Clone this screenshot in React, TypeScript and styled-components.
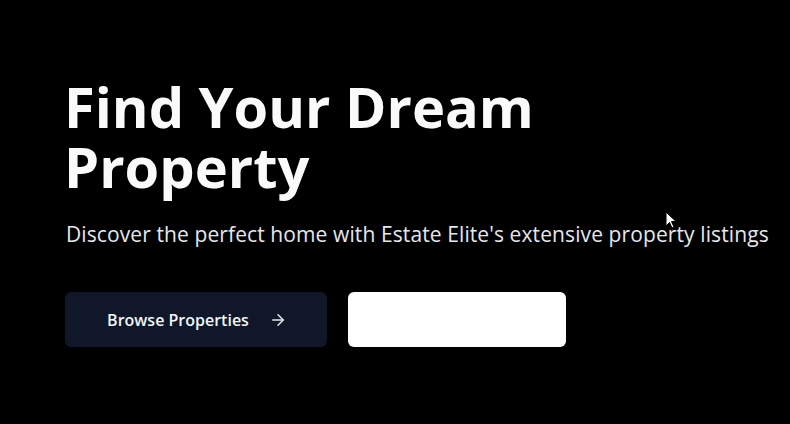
import React from "react";
import styled, { createGlobalStyle } from "styled-components";

const Global = createGlobalStyle`
  html, body { margin: 0; padding: 0; background: #000; }
  body { font-family: "Open Sans", "Noto Sans", sans-serif; }
  * { box-sizing: border-box; }
`;

const Page = styled.div`
  position: relative;
  width: 790px;
  height: 424px;
  background: #000;
  overflow: hidden;
  padding: 76px 0 0 64px;
`;

const Hero = styled.section`
  display: flex;
  flex-direction: column;
  align-items: flex-start;
`;

const Title = styled.h1`
  margin: 0;
  font-family: "Open Sans", sans-serif;
  font-weight: 700;
  font-size: 56px;
  line-height: 60px;
  letter-spacing: 0;
  color: #fafafa;
`;

const Subtitle = styled.p`
  margin: 24px 0 0 2px;
  font-family: "Open Sans", sans-serif;
  font-size: 21px;
  line-height: 28px;
  letter-spacing: 0.1px;
  color: #e5e7eb;
`;

const Actions = styled.div`
  display: flex;
  gap: 21px;
  margin: 44px 0 0 1px;
`;

const Button = styled.button<{ $variant: "dark" | "light" }>`
  display: flex;
  align-items: center;
  justify-content: center;
  gap: 20px;
  height: 55px;
  width: ${(p) => (p.$variant === "dark" ? "262px" : "218px")};
  border: none;
  border-radius: 6px;
  background: ${(p) => (p.$variant === "dark" ? "#0f1729" : "#ffffff")};
  color: #f1f5f9;
  font-family: "Open Sans", sans-serif;
  font-size: 16px;
  font-weight: 600;
  letter-spacing: 0;
  padding: 0 0 0 2px;
  cursor: pointer;
`;

const Cursor = styled.svg`
  position: absolute;
  left: 665px;
  top: 211px;
`;

export default function App() {
  return (
    <>
      <Global />
      <Page>
        <Hero>
          <Title>
            Find Your Dream
            <br />
            Property
          </Title>
          <Subtitle>
            Discover the perfect home with Estate Elite's extensive property listings
          </Subtitle>
          <Actions>
            <Button $variant="dark">
              Browse Properties
              <svg width="18" height="18" viewBox="0 0 24 24" fill="none" stroke="#e5e7eb" strokeWidth="2" strokeLinecap="round" strokeLinejoin="round">
                <path d="M5 12h14" />
                <path d="m12 5 7 7-7 7" />
              </svg>
            </Button>
            <Button $variant="light" />
          </Actions>
        </Hero>
        <Cursor width="12" height="18" viewBox="0 0 12 18">
          <path d="M1 1 L1 15 L4.5 11.5 L7 17 L9 16 L6.5 10.5 L11 10.5 Z" fill="#fff" stroke="#000" strokeWidth="1" />
        </Cursor>
      </Page>
    </>
  );
}
